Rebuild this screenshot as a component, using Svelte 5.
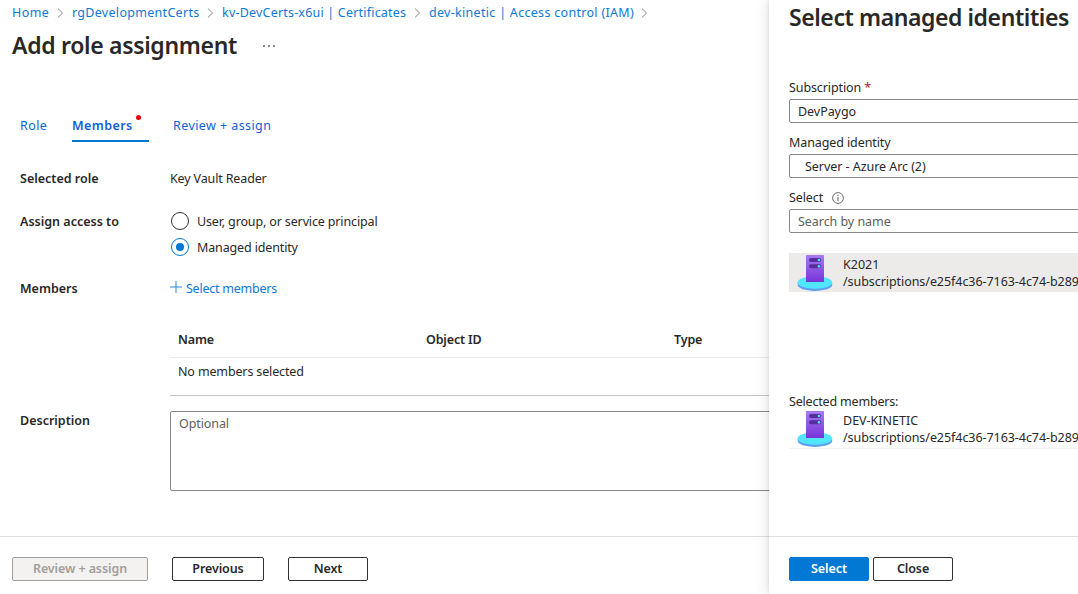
<script>
  const crumbs = [
    { text: 'Home', width: 38, tracking: 0.4 },
    { text: 'rgDevelopmentCerts', width: 128, tracking: 0.3 },
    { text: 'kv-DevCerts-x6ui | Certificates', width: 185, tracking: 0.2 },
    { text: 'dev-kinetic | Access control (IAM)', width: 205, tracking: 0.3 },
  ];
  const path = '/subscriptions/e25f4c36-7163-4c74-b289';
</script>

{#snippet server(id)}
  <svg class="server" width="36" height="38" viewBox="0 0 36 38">
    <defs>
      <linearGradient id={id} x1="0" y1="0" x2="0" y2="1">
        <stop offset="0" stop-color="#a67af4" />
        <stop offset="1" stop-color="#7834d8" />
      </linearGradient>
    </defs>
    <path d="M.7 28.5v2.6c0 3.3 7.7 5.8 17.2 5.8s17.3-2.5 17.3-5.8v-2.6z" fill="#5ea0ef" />
    <ellipse cx="17.9" cy="28.5" rx="17.3" ry="6.2" fill="#50e6ff" />
    <rect x="9" y="1" width="18" height="27" rx=".6" fill="url(#{id})" />
    <rect x="12" y="4" width="12.2" height="4" rx="2" fill="#552f99" />
    <rect x="12" y="10.3" width="12.2" height="4" rx="2" fill="#552f99" />
    <circle cx="22" cy="6" r="1.35" fill="#50e6ff" />
    <circle cx="22" cy="12.3" r="1.35" fill="#50e6ff" />
  </svg>
{/snippet}

<div class="page">
  <main>
    <nav class="crumbs">
      {#each crumbs as crumb}
        <a href="#top" style:width="{crumb.width}px" style:letter-spacing="{crumb.tracking}px">{crumb.text}</a>
        <svg width="7" height="10" viewBox="0 0 7 10"><path d="M1 .6 5.6 5 1 9.4" fill="none" stroke="#8a8886" /></svg>
      {/each}
    </nav>
    <header><h1>Add role assignment</h1><span class="more"><i></i><i></i><i></i></span></header>
    <div class="tabs">
      <span class="role">Role</span>
      <span class="active">Members<b class="dot"></b></span>
      <span class="review">Review + assign</span>
    </div>
    <div class="form">
      <div class="label">Selected role</div><div class="value">Key Vault Reader</div>
      <div class="label">Assign access to</div>
      <div class="radios">
        <div class="option"><span class="radio"></span><span class="otext">User, group, or service principal</span></div>
        <div class="option"><span class="radio on"></span><span class="otext">Managed identity</span></div>
      </div>
      <div class="label">Members</div>
      <div class="add"><svg width="12" height="12" viewBox="0 0 12 12"><path d="M6 0v12M0 6h12" stroke="#2b88d8" /></svg><span>Select members</span></div>
    </div>
    <div class="table">
      <div class="thead"><span>Name</span><span>Object ID</span><span>Type</span></div>
      <div class="empty"><span>No members selected</span></div>
    </div>
    <div class="description"><div class="label desc">Description</div><div class="textarea">Optional</div></div>
    <footer>
      <div class="btn disabled">Review + assign</div>
      <div class="btn prev">Previous</div>
      <div class="btn next">Next</div>
    </footer>
  </main>

  <aside>
    <h2>Select managed identities</h2>
    <div class="fields">
      <div class="flabel">Subscription <em>*</em></div>
      <div class="input i1">DevPaygo</div>
      <div class="flabel">Managed identity</div>
      <div class="input i2">Server - Azure Arc (2)</div>
      <div class="flabel">Select
        <svg width="12" height="12" viewBox="0 0 12 12"><circle cx="6" cy="6" r="5.4" fill="none" stroke="#605e5c" stroke-width=".9" /><path d="M6 5v4M6 2.8v1.2" stroke="#605e5c" /></svg>
      </div>
      <div class="input i3">Search by name</div>
    </div>
    <div class="item hover">{@render server('tower-a')}<div class="lines"><span>K2021</span><span class="path">{path}</span></div></div>
    <div class="chosen">Selected members:</div>
    <div class="item picked">{@render server('tower-b')}<div class="lines"><span>DEV-KINETIC</span><span class="path">{path}</span></div></div>
    <footer>
      <div class="btn primary">Select</div>
      <div class="btn close">Close</div>
    </footer>
  </aside>
</div>

<style>
  :global(body) { margin: 0; background: #fff; overflow: hidden; }
  .page {
    display: grid; grid-template-columns: 769px 309px; width: 1078px; height: 594px; overflow: hidden;
    font: 12.5px/18px "Noto Sans", "Open Sans", sans-serif; color: #292827; white-space: nowrap;
  }
  * { box-sizing: border-box; }
  main, aside { display: flex; flex-direction: column; min-width: 0; height: 594px; }
  aside { position: relative; background: #fff; box-shadow: 0 0 14px rgba(0, 0, 0, .14), 0 0 3px rgba(0, 0, 0, .1); padding-left: 20px; }
  h1, h2 { margin: 0; font-size: 23px; line-height: 32px; font-weight: 600; }
  .crumbs { display: flex; align-items: center; height: 26px; padding-left: 12px; }
  .crumbs a { color: #0f78d4; text-decoration: none; }
  .crumbs svg { margin: 0 8px 0 7px; flex: none; }
  header { display: flex; height: 68px; padding: 3px 0 0 12px; }
  h1 { width: 251px; letter-spacing: -.32px; }
  .more { display: flex; gap: 3px; padding-top: 16px; }
  .more i { width: 2px; height: 2px; background: #8a8886; }
  .tabs { display: flex; height: 48px; padding: 23px 0 0 20px; color: #1160d8; letter-spacing: .42px; }
  .tabs span { height: 25px; }
  .role { width: 52px; }
  .active { position: relative; width: 77px; font-weight: 600; border-bottom: 2px solid #0078d4; margin-right: 24px; }
  .dot { position: absolute; left: 64px; top: -2px; width: 5px; height: 5px; border-radius: 50%; background: #f50000; }
  .form { display: grid; grid-template-columns: 150px 1fr; grid-template-rows: 43px 67px 40px; padding: 28px 0 0 20px; height: 181px; }
  .label { font-weight: 600; }
  .value, .otext, .empty { letter-spacing: -.14px; }
  .radios { margin-top: -1px; }
  .option { display: flex; align-items: center; gap: 7px; height: 18px; margin: 0 0 8px 1px; }
  .otext { padding-top: 2px; }
  .radio { display: grid; place-items: center; width: 18px; height: 18px; border: 1px solid #323130; border-radius: 50%; margin-right: 1px; }
  .radio.on { border-color: #0078d4; }
  .radio.on::after { content: ""; width: 8px; height: 8px; border-radius: 50%; background: #0078d4; }
  .add { display: flex; gap: 4px; color: #0f78d4; letter-spacing: -.24px; }
  .add svg { margin-top: 1px; }
  .table { height: 73px; margin-left: 170px; border-bottom: 1px solid #c8c6c4; }
  .thead { display: grid; grid-template-columns: 248px 248px 1fr; height: 35px; padding: 8px 0 0 8px; border-bottom: 1px solid #edebe9; font-weight: 600; letter-spacing: -.15px; }
  .empty { padding: 5px 8px; }
  .description { display: grid; grid-template-columns: 150px 620px; height: 140px; padding: 15px 0 0 20px; }
  .desc { padding-top: 1px; }
  .textarea { height: 80px; padding: 3px 8px; border: 1px solid #8a8886; border-radius: 2px; color: #605e5c; letter-spacing: -.1px; }
  footer { display: flex; height: 58px; padding: 20px 0 0 12px; border-top: 1px solid #e1dfdd; }
  .btn { height: 24px; line-height: 22px; text-align: center; border: 1px solid #323130; border-radius: 2px; font-weight: 600; letter-spacing: -.1px; }
  .disabled { width: 136px; margin-right: 24px; color: #a19f9d; background: #f3f2f1; border-color: #a19f9d; }
  .prev { width: 92px; margin-right: 24px; }
  .next, .close, .primary { width: 80px; }
  .primary { color: #fff; background: #0078d4; border-color: #0078d4; margin-right: 4px; }
  h2 { height: 78px; padding-top: 1px; letter-spacing: -.42px; }
  .flabel { display: flex; align-items: center; height: 21px; padding-bottom: 1px; letter-spacing: -.1px; }
  .flabel em { color: #a4262c; font-style: normal; margin-left: 3px; }
  .flabel svg { margin-left: 9px; }
  .input { height: 24px; line-height: 23px; margin-bottom: 10px; width: 310px; padding-left: 8px; border: 1px solid #8a8886; border-radius: 2px; letter-spacing: -.05px; }
  .i2 { padding-left: 15px; }
  .i3 { color: #605e5c; margin-bottom: 20px; }
  .item { display: flex; height: 39px; padding-left: 8px; width: 289px; flex: none; }
  .hover { background: #edebe9; }
  .server { margin-top: 1px; flex: none; }
  .lines { display: flex; flex-direction: column; padding: 3px 0 0 10px; line-height: 17px; }
  .path { letter-spacing: -.06px; }
  .chosen { margin-top: 101px; height: 17px; letter-spacing: -.18px; }
  .picked { border-bottom: 1px solid #f3f2f1; }
  .picked .server { margin-top: 0; }
  .picked .lines { padding-top: 2px; }
  aside footer { margin: auto 0 0 -20px; padding-left: 20px; }
</style>
